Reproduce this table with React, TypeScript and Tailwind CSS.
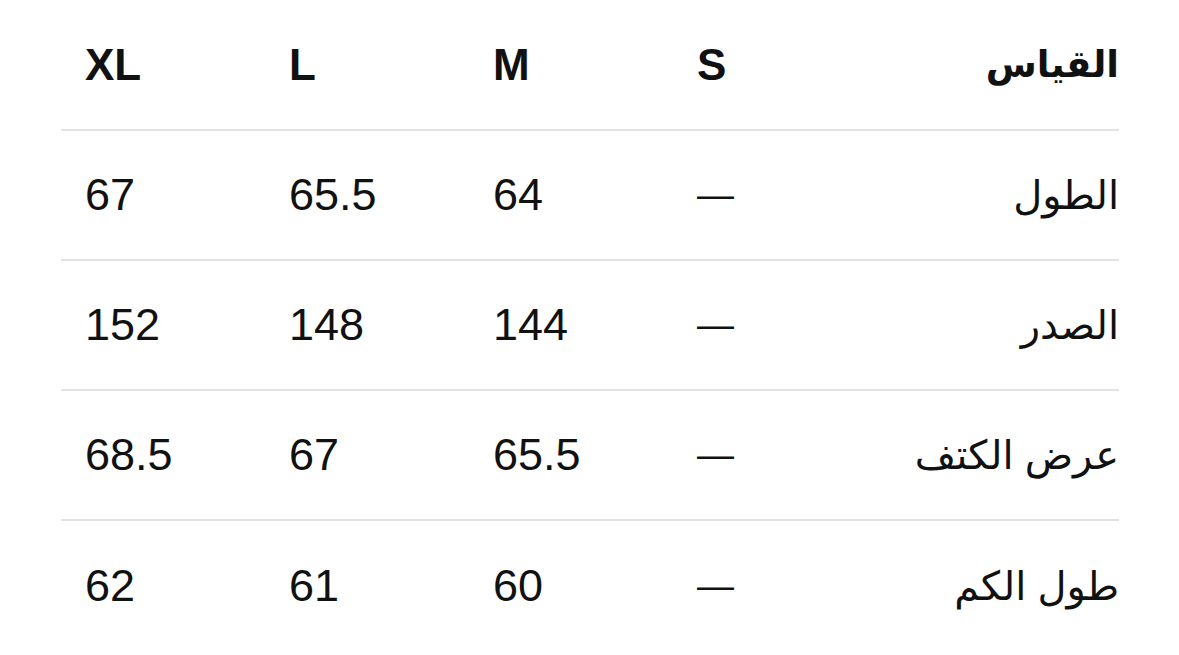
import React from 'react';

const sizes = ['S', 'M', 'L', 'XL'];

const rows: { label: string; values: string[] }[] = [
  { label: 'الطول', values: ['—', '64', '65.5', '67'] },
  { label: 'الصدر', values: ['—', '144', '148', '152'] },
  { label: 'عرض الكتف', values: ['—', '65.5', '67', '68.5'] },
  { label: 'طول الكم', values: ['—', '60', '61', '62'] },
];

const gridCols = 'grid grid-cols-[242px_204px_204px_204px_204px]';

export default function App() {
  return (
    <div className="w-[1179px] h-[655px] bg-white overflow-hidden pl-[61px] text-[#111111] font-['Liberation_Sans','DejaVu_Sans','Noto_Sans',sans-serif]">
      <div dir="rtl" className="w-[1058px]">
        {/* Header */}
        <div className={`${gridCols} h-[131px] items-center border-b-2 border-[#e2e2e2] font-bold text-[44px]`}>
          <div className="text-right text-[37px]">القياس</div>
          {sizes.map((s) => (
            <div key={s} dir="ltr" className="text-left pl-6">
              {s}
            </div>
          ))}
        </div>

        {/* Body */}
        {rows.map((row, i) => (
          <div
            key={row.label}
            className={`${gridCols} h-[130px] items-center text-[45px] ${
              i < rows.length - 1 ? 'border-b-2 border-[#e2e2e2]' : ''
            }`}
          >
            <div className="text-right text-[40px]">{row.label}</div>
            {row.values.map((v, j) => (
              <div key={j} dir="ltr" className={`text-left pl-6 ${v === '—' ? 'text-[37px]' : ''}`}>
                {v}
              </div>
            ))}
          </div>
        ))}
      </div>
    </div>
  );
}
